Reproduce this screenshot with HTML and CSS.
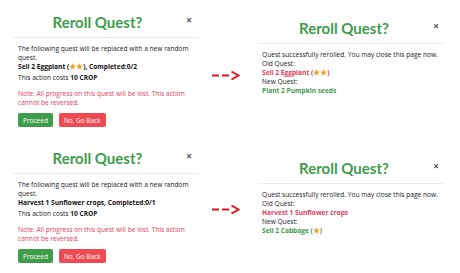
FILE: index.html
```html
<!DOCTYPE html>
<html lang="en">
<head>
    <meta charset="UTF-8">
    <title>Reroll Quest</title>
    <link rel="stylesheet" href="styles.css">
</head>
<body>
    <div class="board">
        <!-- Linha 1 -->
        <div class="modal">
            <div class="modal-header">
                <h2 class="modal-title">Reroll Quest?</h2>
                <span class="close">&times;</span>
            </div>
            <div class="modal-body">
                <p>The following quest will be replaced with a new random quest.</p>
                <p class="quest-line"><b>Sell 2 Eggplant (<svg class="star" viewBox="0 0 10 10"><polygon points="5,0.4 6.4,3.4 9.6,3.7 7.2,5.9 7.9,9.2 5,7.5 2.1,9.2 2.8,5.9 0.4,3.7 3.6,3.4"/></svg><svg class="star" viewBox="0 0 10 10"><polygon points="5,0.4 6.4,3.4 9.6,3.7 7.2,5.9 7.9,9.2 5,7.5 2.1,9.2 2.8,5.9 0.4,3.7 3.6,3.4"/></svg>), Completed:0/2</b></p>
                <p class="cost">This action costs <b>10 CROP</b></p>
                <p class="note">Note: All progress on this quest will be lost. This action cannot be reversed.</p>
                <div class="actions">
                    <button class="btn btn-proceed">Proceed</button>
                    <button class="btn btn-back">No, Go Back</button>
                </div>
            </div>
        </div>

        <div class="arrow arrow-top">
            <svg width="28" height="10" viewBox="0 0 28 10"><path d="M0 5.5H7M10 5.5H17" /><path d="M19.5 1.5L26.5 5.5L19.5 9.5" /></svg>
        </div>

        <div class="modal modal-right-top">
            <div class="modal-header">
                <h2 class="modal-title">Reroll Quest?</h2>
                <span class="close">&times;</span>
            </div>
            <div class="modal-body">
                <p>Quest successfully rerolled. You may close this page now.</p>
                <p>Old Quest:</p>
                <p class="old-quest">Sell 2 Eggplant (<svg class="star" viewBox="0 0 10 10"><polygon points="5,0.4 6.4,3.4 9.6,3.7 7.2,5.9 7.9,9.2 5,7.5 2.1,9.2 2.8,5.9 0.4,3.7 3.6,3.4"/></svg><svg class="star" viewBox="0 0 10 10"><polygon points="5,0.4 6.4,3.4 9.6,3.7 7.2,5.9 7.9,9.2 5,7.5 2.1,9.2 2.8,5.9 0.4,3.7 3.6,3.4"/></svg>)</p>
                <p>New Quest:</p>
                <p class="new-quest">Plant 2 Pumpkin seeds</p>
            </div>
        </div>

        <!-- Linha 2 -->
        <div class="modal">
            <div class="modal-header">
                <h2 class="modal-title">Reroll Quest?</h2>
                <span class="close">&times;</span>
            </div>
            <div class="modal-body">
                <p>The following quest will be replaced with a new random quest.</p>
                <p class="quest-line"><b>Harvest 1 Sunflower crops, Completed:0/1</b></p>
                <p class="cost">This action costs <b>10 CROP</b></p>
                <p class="note">Note: All progress on this quest will be lost. This action cannot be reversed.</p>
                <div class="actions">
                    <button class="btn btn-proceed">Proceed</button>
                    <button class="btn btn-back">No, Go Back</button>
                </div>
            </div>
        </div>

        <div class="arrow arrow-bottom">
            <svg width="28" height="10" viewBox="0 0 28 10"><path d="M0 5.5H7M10 5.5H17" /><path d="M19.5 1.5L26.5 5.5L19.5 9.5" /></svg>
        </div>

        <div class="modal modal-right-bottom">
            <div class="modal-header">
                <h2 class="modal-title">Reroll Quest?</h2>
                <span class="close">&times;</span>
            </div>
            <div class="modal-body">
                <p>Quest successfully rerolled. You may close this page now.</p>
                <p>Old Quest:</p>
                <p class="old-quest">Harvest 1 Sunflower crops</p>
                <p>New Quest:</p>
                <p class="new-quest">Sell 2 Cabbage (<svg class="star" viewBox="0 0 10 10"><polygon points="5,0.4 6.4,3.4 9.6,3.7 7.2,5.9 7.9,9.2 5,7.5 2.1,9.2 2.8,5.9 0.4,3.7 3.6,3.4"/></svg>)</p>
            </div>
        </div>
    </div>
</body>
</html>
```

FILE: styles.css
```css
:root {
    --green: #3f9c4b;
    --red: #e23b58;
    --btn-red: #ef4a51;
    --text-color: #222;
    --border-color: #ececec;
    --star-color: #f4a21d;
    --arrow-color: #e3141c;
}

* {
    margin: 0;
    padding: 0;
    box-sizing: border-box;
}

body {
    background-color: white;
    font-family: 'Open Sans', 'Lato', sans-serif;
    color: var(--text-color);
}

.board {
    display: grid;
    grid-template-columns: 186px 60px 187px;
    grid-template-rows: 136px 137px;
    padding: 4px 0 0 12px;
}

.modal {
    width: 100%;
}

.modal-right-top {
    margin-top: 6px;
}

.modal-right-bottom {
    margin-top: 10px;
}

/* Título centrado no espaço à esquerda do botão de fechar */
.modal-header {
    display: flex;
    align-items: center;
    height: 34px;
    border-bottom: 1px solid var(--border-color);
}

.modal-title {
    flex: 1;
    text-align: center;
    font-family: 'Lato', sans-serif;
    font-size: 15px;
    font-weight: 700;
    color: var(--green);
    line-height: 20px;
    padding-top: 2px;
}

.close {
    width: 12px;
    margin-right: 3px;
    margin-bottom: 2px;
    text-align: center;
    font-size: 10px;
    font-weight: 700;
    color: #555;
    line-height: 10px;
}

.modal-body {
    padding: 6px 2px 0 6px;
    font-size: 6.6px;
    line-height: 9px;
}

.modal-right-top .modal-body,
.modal-right-bottom .modal-body {
    padding: 6px 0 0 4px;
}

.quest-line {
    color: #111;
}

.cost {
    margin-top: 2px;
}

.cost b {
    font-weight: 700;
}

.note {
    margin-top: 7px;
    color: var(--red);
}

.old-quest {
    color: var(--red);
    font-weight: 700;
}

.new-quest {
    color: var(--green);
    font-weight: 700;
}

.star {
    width: 7px;
    height: 7px;
    vertical-align: -1px;
    fill: var(--star-color);
}

.actions {
    display: flex;
    gap: 6px;
    margin-top: 6px;
}

.btn {
    height: 14px;
    padding: 0 5px;
    border: none;
    border-radius: 2px;
    font-family: inherit;
    font-size: 6.5px;
    color: white;
}

.btn-proceed {
    background-color: var(--green);
}

.btn-back {
    background-color: var(--btn-red);
}

.arrow {
    display: flex;
    justify-content: center;
    padding-right: 4px;
}

.arrow-top {
    margin-top: 66px;
}

.arrow-bottom {
    margin-top: 64px;
}

.arrow path {
    fill: none;
    stroke: var(--arrow-color);
    stroke-width: 2;
}
```
